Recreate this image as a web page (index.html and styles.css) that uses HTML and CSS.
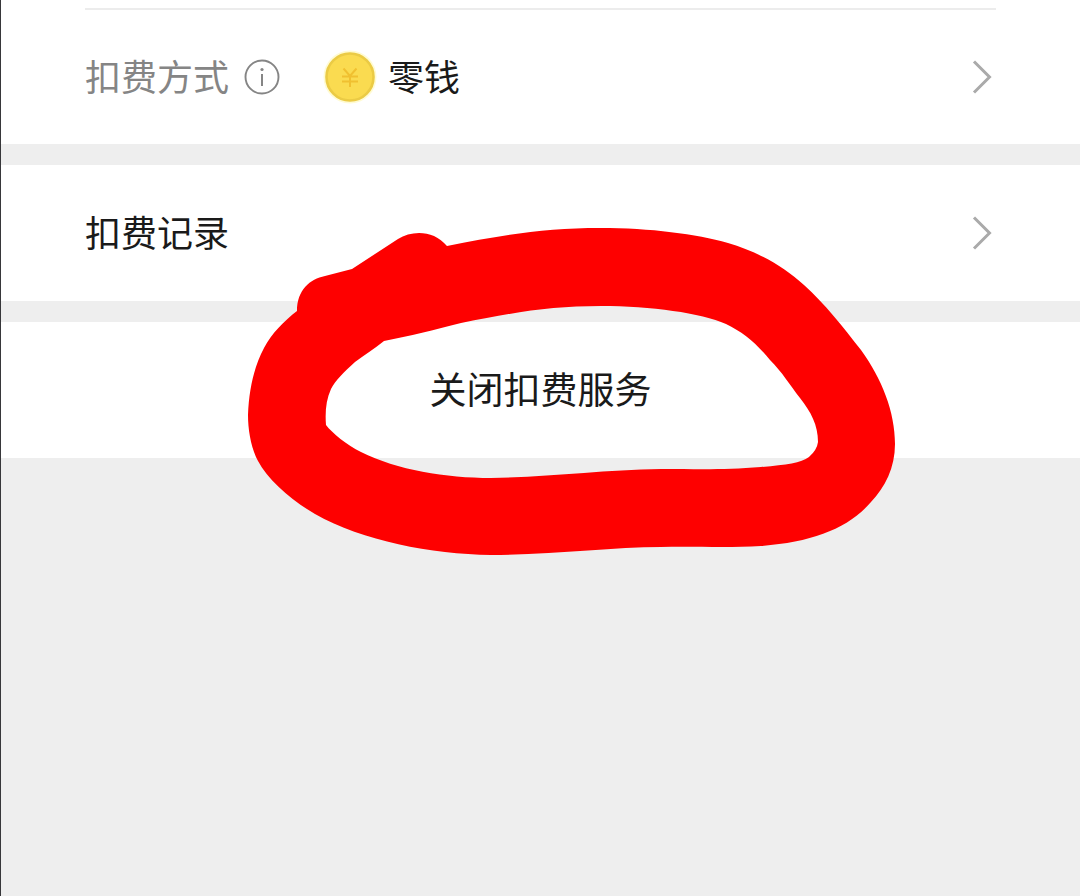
FILE: index.html
```html
<!DOCTYPE html>
<html lang="zh-CN">
<head>
<meta charset="utf-8">
<meta name="viewport" content="width=device-width, initial-scale=1">
<title>扣费服务</title>
<link rel="stylesheet" href="styles.css">
</head>
<body>
<main class="page">
  <section class="group group-first">
    <button class="row" type="button">
      <span class="label label-muted">扣费方式</span>
      <svg class="info" viewBox="0 0 36 36" aria-hidden="true">
        <circle cx="18" cy="18" r="16.5" fill="none" stroke="#858585" stroke-width="1.9"/>
        <circle cx="18" cy="10.5" r="1.6" fill="#858585"/>
        <path d="M18 15v12" stroke="#858585" stroke-width="2"/>
      </svg>
      <svg class="coin" viewBox="0 0 56 56" aria-hidden="true">
        <circle cx="28" cy="28" r="26.5" fill="#fffbd2"/>
        <circle cx="28" cy="28" r="23.5" fill="#fadb50" stroke="#ebcb45" stroke-width="2.6"/>
        <path d="M21.5 19.5l6.500 7.500 6.500-7.500M28 27v11M20 27.500h16M20 32.500h16" fill="none" stroke="#f0c030" stroke-width="2"/>
      </svg>
      <span class="label">零钱</span>
      <svg class="chevron" viewBox="0 0 20 36" aria-hidden="true"><path d="M2 2.500l15.500 15.500L2 33.500"/></svg>
    </button>
  </section>
  <section class="group">
    <button class="row" type="button">
      <span class="label">扣费记录</span>
      <svg class="chevron" viewBox="0 0 20 36" aria-hidden="true"><path d="M2 2.500l15.500 15.500L2 33.500"/></svg>
    </button>
  </section>
  <section class="group marked">
    <button class="row row-center" type="button"><span class="label label-action">关闭扣费服务</span></button>
    <svg class="marker" viewBox="240 220 664 344" aria-hidden="true">
      <path fill="#fe0000" fill-rule="evenodd" d="M296 311C296 290 309 279 324 276L351 269L397 239C411 230 433 230 446 246C500 235 545 228 599 228C650 228 695 234 727 243C758 252 783 267 803 285C824 304 842 327 860 350C881 379 894 412 894 444C894 468 884 487 870 502C848 528 812 542 760 546C725 548 690 546 660 547C610 547 550 555 490 555C430 554 362 541 314 514C290 500 267 480 257 461C250 448 247 430 247 415C248 389 253 367 263 348C271 333 283 321 296 311Z
      M383 341C373 349 363 355 354 362C343 372 334 381 330 389C325 400 324 412 325 425C331 433 346 445 360 452C396 470 445 478 490 478C550 477 600 470 660 469C700 469 725 470 760 467C785 465 800 463 808 457Q816 450 817 442C817 425 810 412 799 398C789 385 781 372 769 360C756 344 742 332 725 324C700 313 650 306 600 306C550 306 515 312 460 323C433 330 409 336 383 341Z"/>
    </svg>
  </section>
</main>
</body>
</html>
```
FILE: styles.css
```css
* {
  box-sizing: border-box;
}

body {
  margin: 0;
  background: #eee;
  color: #1a1a1a;
  font-family: "Noto Sans CJK SC", sans-serif;
}

.page {
  display: flex;
  flex-direction: column;
  gap: 21px;
  min-height: 100vh;
  border-left: 1px solid #37373a;
}

.group {
  background: #fff;
}

.group-first {
  padding-top: 8px;
}

.group-first::before {
  content: "";
  display: block;
  height: 2px;
  margin: 0 84px;
  background: #ececec;
}

.row {
  display: flex;
  align-items: center;
  width: 100%;
  padding: 40px 88px 40px 84px;
  border: 0;
  background: none;
  color: inherit;
  font: inherit;
  text-align: left;
}

.group-first .row {
  padding-top: 39px;
  padding-bottom: 39px;
}

.row-center {
  justify-content: center;
  padding-left: 84px;
  padding-right: 84px;
}

.label {
  padding-bottom: 4px;
  font-size: 36px;
  line-height: 52px;
}

.label-action {
  font-size: 37px;
}

.label-muted {
  color: #858585;
}

.info {
  width: 36px;
  height: 36px;
  margin-left: 15px;
}

.coin {
  width: 56px;
  height: 56px;
  margin: 0 10px 0 42px;
}

.chevron {
  width: 20px;
  height: 36px;
  margin-left: auto;
}

.chevron path {
  fill: none;
  stroke: #aaa;
  stroke-width: 3;
}

.marked {
  position: relative;
}

.marker {
  position: absolute;
  top: -102px;
  left: calc(50% - 300px);
  width: 664px;
  height: 344px;
  pointer-events: none;
}
```
